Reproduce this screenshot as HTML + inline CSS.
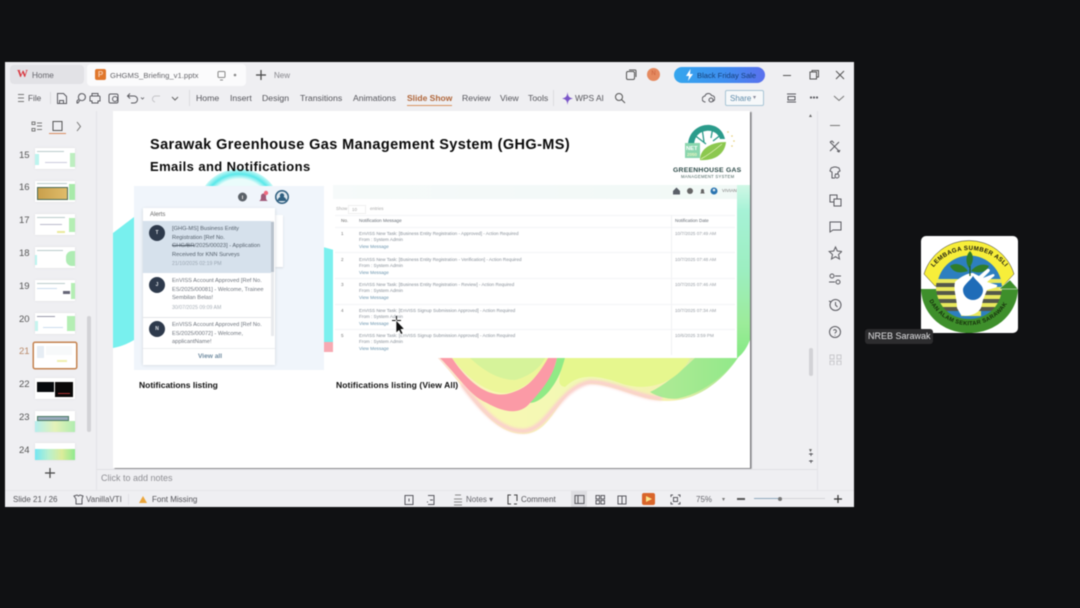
<!DOCTYPE html>
<html><head><meta charset="utf-8">
<style>
html,body{margin:0;padding:0}
body{width:1080px;height:608px;overflow:hidden;background:#101113;font-family:"Liberation Sans",sans-serif;position:relative}
#w{position:absolute;left:0;top:0;width:1080px;height:608px;filter:blur(.45px)}
.a{position:absolute;white-space:nowrap}
.t{position:absolute;white-space:nowrap;color:#4a4a4e;font-size:8.7px;line-height:11px}
.s{font-size:8px!important}
.n{position:absolute;left:19px;font-size:9.5px;color:#555;line-height:12px}
.th{position:absolute;left:35px;width:40px;height:21px;background:#fff;box-shadow:0 0 2px #dcdce0;overflow:hidden}
.th i{position:absolute;display:block}
.ic{position:absolute;stroke:#5a5a60;fill:none;stroke-width:1}
.m{position:absolute;left:359px;font-size:4.6px;line-height:6.3px;color:#868e97;white-space:nowrap}
.m b{font-weight:400;color:#6a94ae}
.d{position:absolute;left:675px;font-size:4.6px;color:#969ca3;white-space:nowrap}
.k{position:absolute;left:341px;font-size:4.6px;color:#777}
.al{position:absolute;left:172px;font-size:5.7px;line-height:8.5px;color:#6f757e;white-space:nowrap}
.av{position:absolute;left:149px;width:16px;height:16px;border-radius:8px;background:#2e3a4c;color:#dfe3e8;font-size:5px;line-height:16px;text-align:center;font-weight:700}
.hl{position:absolute;left:335px;width:400px;height:1px;background:#f3f4f6}
</style></head><body><div id="w">

<!-- window -->
<div class="a" style="left:5px;top:62px;width:849px;height:445px;background:#efeff2"></div>

<!-- tabs -->
<div class="a" style="left:10px;top:65px;width:74px;height:19px;background:#e2e2e6;border-radius:4px"></div>
<div class="a" style="left:17px;top:68px;font-size:11px;font-weight:700;color:#d9363e;line-height:12px;font-family:'Liberation Serif',serif">W</div>
<div class="t" style="left:32px;top:70px;color:#66666c;font-size:8.2px">Home</div>
<div class="a" style="left:87px;top:64px;width:159px;height:22px;background:#fbfbfc;border-radius:4px"></div>
<div class="a" style="left:95px;top:69px;width:11px;height:11px;background:#e0772c;border-radius:2px;color:#f7c9a8;font-size:8px;line-height:11px;text-align:center;font-weight:700">P</div>
<div class="t" style="left:110px;top:70px;color:#66666b;font-size:7.7px">GHGMS_Briefing_v1.pptx</div>
<svg class="ic" style="left:216px;top:70px;stroke:#888" width="26" height="12" viewBox="0 0 26 12"><rect x="2" y="1.500" width="7" height="6" rx="1"/><path d="M4 10h3"/><circle cx="19" cy="5" r="1.300" fill="#888" stroke="none"/></svg>
<svg class="ic" style="left:255px;top:69px;stroke:#444" width="12" height="12" viewBox="0 0 12 12"><path d="M6 1v10M1 6h10" stroke-width="1.200"/></svg>
<div class="t" style="left:274px;top:70px;font-size:8px;color:#85858b">New</div>

<!-- title right -->
<svg class="ic" style="left:625px;top:69px;stroke:#555" width="12" height="12" viewBox="0 0 12 12"><rect x="1.500" y="2.500" width="8" height="8" rx="1.500"/><path d="M4 1h6a1 1 0 0 1 1 1v6"/></svg>
<div class="a" style="left:647px;top:68px;width:13px;height:13px;border-radius:7px;background:#e58a60;color:#c9603c;font-size:6px;line-height:13px;text-align:center">N</div>
<div class="a" style="left:674px;top:67px;width:91px;height:16px;border-radius:8px;background:linear-gradient(90deg,#35a6ee,#3f8ff0 55%,#5a70ee)"></div>
<svg class="a" style="left:686px;top:69px" width="7" height="12" viewBox="0 0 7 12"><path d="M4.500 0L0 7h3L2 12l5-7H4z" fill="#fff"/></svg>
<div class="a" style="left:697px;top:70px;font-size:7.600px;line-height:11px;color:#16407a">Black Friday Sale</div>
<svg class="ic" style="left:782px;top:69px;stroke:#555" width="64" height="12" viewBox="0 0 64 12"><path d="M1 6.500h8"/><rect x="28" y="3" width="6.500" height="7"/><path d="M30 3V1.500h6.500V8h-2"/><path d="M54 2l8 8M62 2l-8 8"/></svg>

<!-- toolbar -->
<svg class="ic" style="left:17px;top:93px;stroke:#777" width="9" height="10" viewBox="0 0 9 10"><path d="M1 1.500h6M1 5h6M1 8.500h6"/></svg>
<div class="t" style="left:28px;top:93px;font-size:8.200px;color:#55555a">File</div>
<div class="a" style="left:50px;top:92px;width:1px;height:12px;background:#dcdce0"></div>
<svg class="ic" style="left:56px;top:92px" width="125" height="13" viewBox="0 0 125 13"><path d="M1.500 1.500h6l3 3v7h-9zM3.500 11.500v-3h4v3"/><path d="M24 8l-2 3h-1v-2l2-2a3.500 3.500 0 1 1 1 1z"/><path d="M36 4V1.500h6V4M35 4h8a1 1 0 0 1 1 1v4h-2v2h-6V9h-2V5a1 1 0 0 1 1-1z"/><rect x="53" y="2" width="9" height="9" rx="1.500"/><circle cx="59" cy="7" r="2.500"/><path d="M72 4h6a3 3 0 0 1 0 7h-3M74 1.500L71.500 4 74 6.500"/><path d="M85 5.500l1.500 1.500 1.500-1.500" stroke-width=".8"/><path d="M104 4h-4a3 3 0 0 0-1 6" stroke="#c4c4c8"/><path d="M116 5l3 3 3-3" stroke="#666"/></svg>
<div class="a" style="left:189px;top:90px;width:1px;height:16px;background:#dcdce0"></div>
<div class="t" style="left:196px;top:93px;color:#55555b">Home</div>
<div class="t" style="left:230px;top:93px;color:#55555b">Insert</div>
<div class="t" style="left:262px;top:93px;color:#55555b">Design</div>
<div class="t" style="left:300px;top:93px;color:#55555b">Transitions</div>
<div class="t" style="left:353px;top:93px;color:#55555b">Animations</div>
<div class="t" style="left:407px;top:93px;color:#b0663a;font-weight:700;font-size:8.500px">Slide Show</div>
<div class="a" style="left:407px;top:105px;width:45px;height:1px;background:#d9925f"></div>
<div class="t" style="left:462px;top:93px;color:#55555b">Review</div>
<div class="t" style="left:500px;top:93px;color:#55555b">View</div>
<div class="t" style="left:528px;top:93px;color:#55555b">Tools</div>
<div class="a" style="left:553px;top:90px;width:1px;height:16px;background:#dcdce0"></div>
<svg class="a" style="left:562px;top:92px" width="11" height="13" viewBox="0 0 11 13"><path d="M5.500 0C6 4.500 7 5.500 11 6.500 7 7.500 6 8.500 5.500 13 5 8.500 4 7.500 0 6.500 4 5.500 5 4.500 5.500 0z" fill="#7a55c8"/></svg>
<div class="t" style="left:575px;top:93px;color:#55555b;font-size:8.400px">WPS AI</div>
<svg class="ic" style="left:614px;top:92px;stroke:#555" width="12" height="12" viewBox="0 0 12 12"><circle cx="5" cy="5" r="3.500"/><path d="M7.500 7.500L11 11"/></svg>
<svg class="ic" style="left:702px;top:92px" width="13" height="12" viewBox="0 0 13 12"><path d="M3.500 10a3 3 0 0 1-.5-6 3.500 3.500 0 0 1 6.500-.5A3 3 0 0 1 10 9.500"/><circle cx="9" cy="8" r="2"/></svg>
<div class="a" style="left:725px;top:90px;width:37px;height:14px;border:1px solid #a9c5d6;border-radius:2px;background:#f6f8fa"></div>
<div class="t" style="left:730px;top:93px;font-size:8px;color:#5f8cab">Share</div>
<div class="t" style="left:753px;top:93px;font-size:6px;color:#889">▾</div>
<svg class="ic" style="left:785px;top:92px" width="60" height="12" viewBox="0 0 60 12"><path d="M2 2h9M2 10h9M3 4.500h7v3.500H3z"/><circle cx="26" cy="5.500" r=".6" fill="#555"/><circle cx="29" cy="5.500" r=".6" fill="#555"/><circle cx="32" cy="5.500" r=".6" fill="#555"/><path d="M49 4l5 4.500L59 4" stroke="#777"/></svg>

<!-- left panel -->
<div class="a" style="left:96px;top:111px;width:1px;height:379px;background:#e3e3e7"></div>
<svg class="ic" style="left:31px;top:120px;stroke:#777" width="55" height="14" viewBox="0 0 55 14"><path d="M1 2h3v2.500H1zM1 8.500h3V11H1zM6 3h5M6 6h5M6 9.500h5"/><rect x="22" y="1.500" width="9" height="9" stroke="#555"/><path d="M46 2l3.500 4.500L46 11"/></svg>
<div class="a" style="left:49px;top:133px;width:17px;height:1px;background:#d98c5e"></div>

<div class="n" style="top:150px">15</div><div class="n" style="top:182px">16</div><div class="n" style="top:215px">17</div><div class="n" style="top:248px">18</div><div class="n" style="top:281px">19</div><div class="n" style="top:314px">20</div><div class="n" style="top:346px;color:#b98a6a">21</div><div class="n" style="top:379px">22</div><div class="n" style="top:412px">23</div><div class="n" style="top:445px">24</div>

<div class="th" style="top:148px"><i style="left:2px;top:3px;width:27px;height:1px;background:#bcc"></i><i style="left:0;top:6px;width:4px;height:11px;background:#bdf4ee"></i><i style="right:0;top:5px;width:5px;height:14px;background:#bdeec0"></i><i style="left:10px;top:14px;width:22px;height:1px;background:#ccd"></i></div>
<div class="th" style="top:181px"><i style="left:2px;top:2px;width:30px;height:1px;background:#bcc"></i><i style="left:2px;top:6px;width:29px;height:11px;background:linear-gradient(90deg,#c9a04c,#e0bc6a);border:1px solid #4a6a55"></i><i style="right:0;top:3px;width:6px;height:16px;background:#a8eaaa"></i></div>
<div class="th" style="top:214px"><i style="left:2px;top:3px;width:28px;height:1px;background:#bcc"></i><i style="left:5px;top:10px;width:22px;height:1px;background:#bbc"></i><i style="right:0;top:4px;width:6px;height:14px;background:#b4eeb4"></i><i style="left:22px;top:17px;width:8px;height:2px;background:#eaea9c"></i></div>
<div class="th" style="top:247px"><i style="left:2px;top:3px;width:26px;height:1px;background:#bcc"></i><i style="left:0;top:8px;width:2px;height:10px;background:#bdf4ee"></i><i style="right:0;top:4px;width:9px;height:15px;background:#afecb4;border-radius:6px 0 0 6px"></i></div>
<div class="th" style="top:280px"><i style="left:2px;top:3px;width:28px;height:1px;background:#bcc"></i><i style="left:28px;top:11px;width:7px;height:3px;background:#667"></i><i style="right:0;top:3px;width:4px;height:16px;background:#b4eeb4"></i><i style="left:2px;top:8px;width:20px;height:1px;background:#cde"></i></div>
<div class="th" style="top:313px"><i style="left:2px;top:3px;width:18px;height:1px;background:#99a"></i><i style="left:0;top:8px;width:3px;height:10px;background:#c6f4ef"></i><i style="right:0;top:3px;width:8px;height:15px;background:#b4eeb4"></i><i style="left:8px;top:14px;width:20px;height:1px;background:#cde"></i></div>
<div class="a" style="left:33px;top:342px;width:42px;height:25px;background:#fff;border:1px solid #c58350;border-radius:2px;box-shadow:0 0 0 .5px #c58350"></div>
<div class="a" style="left:37px;top:346px;width:7px;height:12px;background:#e6edf4"></div>
<div class="a" style="left:46px;top:346px;width:26px;height:9px;background:#f7f9fa"></div>
<div class="a" style="left:57px;top:360px;width:10px;height:2px;background:#f0f0b0"></div>
<div class="th" style="top:378px"><i style="left:2px;top:4px;width:17px;height:10px;background:#06090c"></i><i style="left:20px;top:4px;width:18px;height:15px;background:#0a0808"></i><i style="left:23px;top:15px;width:12px;height:1px;background:#a33"></i></div>
<div class="th" style="top:411px"><i style="left:0;top:10px;width:40px;height:11px;background:linear-gradient(90deg,#b4eeee,#e4f2b8,#b0ecb0)"></i><i style="left:2px;top:5px;width:30px;height:3px;background:#9ab;border:1px solid #4a7a65"></i></div>
<div class="th" style="top:443px;height:17px"><i style="left:0;top:6px;width:40px;height:11px;background:linear-gradient(90deg,#74e6f2,#b8f0d0,#dcec9a,#90ea90)"></i></div>
<div class="a" style="left:87px;top:316px;width:4px;height:116px;background:#d2d2d6;border-radius:2px"></div>
<svg class="ic" style="left:44px;top:467px;stroke:#444" width="12" height="12" viewBox="0 0 12 12"><path d="M6 1v10M1 6h10" stroke-width="1.200"/></svg>

<!-- slide -->
<div class="a" style="left:113px;top:111px;width:637px;height:357px;background:#fff;overflow:hidden;box-shadow:1.500px 1px 1px #77777a"></div>
<svg class="a" style="left:113px;top:111px" width="637" height="357" viewBox="113 111 637 357">
<defs>
<linearGradient id="g1" gradientUnits="userSpaceOnUse" x1="437" y1="0" x2="750" y2="0"><stop offset="0" stop-color="#fbe0d4"/><stop offset=".18" stop-color="#f8f8b4"/><stop offset=".55" stop-color="#f0f8b4"/><stop offset=".75" stop-color="#f6f0b0"/><stop offset=".88" stop-color="#bcea98"/><stop offset="1" stop-color="#80ea84"/></linearGradient>
<linearGradient id="g2" x1="0" y1="0" x2="0" y2="1"><stop offset="0" stop-color="#d0f8e6"/><stop offset=".15" stop-color="#a6f2d6"/><stop offset=".5" stop-color="#9ceec0"/><stop offset=".8" stop-color="#9cec9a"/><stop offset="1" stop-color="#84ea82"/></linearGradient>
<radialGradient id="g3" cx=".5" cy=".5" r=".5"><stop offset=".72" stop-color="#eafcfb"/><stop offset=".86" stop-color="#58e8ea"/><stop offset="1" stop-color="#c8f8f6"/></radialGradient>
<filter id="bw"><feGaussianBlur stdDeviation="1.200"/></filter>
</defs>
<ellipse cx="239" cy="205" rx="40" ry="36" fill="url(#g3)"/>
<path d="M113 233L134 217V340Q124 346 113 348Z" fill="#78f0ee"/>
<path d="M323 247L334 250V342L323 342Z" fill="#7bf0ee"/>
<path d="M323 342L334 342V352H323Z" fill="#f7a9b2"/>
<path d="M436 356C470 392 490 434 523 434C556 434 558 384 590 384C615 384 640 401 667 401C705 401 735 370 750 336V200H737V356Z" fill="url(#g1)"/>
<path d="M462 384C485 415 503 431 523 431C548 431 558 388 590 382C615 382 640 399 662 398" fill="none" stroke="#fbd0cc" stroke-width="4.500" filter="url(#bw)"/>
<path d="M737 185H750V340C745 352 740 356 737 358Z" fill="url(#g2)"/>
<path d="M695 358C680 372 665 385 650 392 660 398 672 400 680 398 705 392 725 375 737 358Z" fill="#90e88a" opacity=".75"/>
<path d="M440 358C460 378 470 396 487 403C505 413 520 415 530 403C545 392 552 378 557 358L548 358C535 378 530 388 507 394C485 398 465 378 452 358Z" fill="#fb9aa6"/>
<path d="M452 358C470 382 490 394 507 393C530 388 540 372 548 358Z" fill="#edf69a"/>
<path d="M470 358C485 372 500 380 515 380 530 376 540 368 545 358Z" fill="#cff39a" opacity=".8"/>
<path d="M557 358C553 378 540 392 530 403C545 402 560 380 565 358Z" fill="#90ea86"/>
<path d="M565 358C560 375 555 385 565 387C580 372 600 376 620 383C650 394 680 380 690 358Z" fill="#e6f78e"/>
</svg>

<div class="a" style="left:150px;top:137px;font-size:14.500px;line-height:17px;font-weight:700;color:#0a0a0a;letter-spacing:.4px">Sarawak Greenhouse Gas Management System (GHG-MS)</div>
<div class="a" style="left:150px;top:159px;font-size:13px;line-height:16px;font-weight:700;color:#0a0a0a;letter-spacing:.4px">Emails and Notifications</div>

<!-- GHG logo -->
<svg class="a" style="left:680px;top:122px" width="60" height="42" viewBox="0 0 60 42">
<path d="M8 24C8 9 20 2 30 3 38 4 43 9 45 17L40 17C38 11 32 8 26 9 18 10 14 16 14 24Z" fill="#2b9b8b"/>
<path d="M13 12L26 22M22 6L24 20M33 5L31 16M42 12L33 19" stroke="#2b9b8b" stroke-width="1.300" fill="none"/>
<path d="M20 38C20 26 32 20 46 20 45 31 36 39 20 38Z" fill="#8cc84f"/>
<path d="M21 37C30 32 36 27 42 22" stroke="#e0f0b8" stroke-width=".8" fill="none"/>
<rect x="5" y="21" width="15" height="15" fill="#8ad6ae"/>
<text x="6" y="28" font-size="5.800" font-weight="700" fill="#fff" font-family="Liberation Sans">NET</text>
<text x="7" y="34" font-size="4.500" font-weight="700" fill="#e9f5c0" font-family="Liberation Sans">2050</text>
<circle cx="48" cy="10" r=".8" fill="#e4cc70"/><circle cx="52" cy="14" r=".8" fill="#e4cc70"/><circle cx="54" cy="19" r=".8" fill="#e4cc70"/><circle cx="52" cy="24" r=".8" fill="#e4cc70"/>
</svg>
<div class="a" style="left:673px;top:166px;font-size:6.800px;line-height:9px;font-weight:700;color:#2d4a48;letter-spacing:.25px">GREENHOUSE GAS</div>
<div class="a" style="left:681px;top:174px;font-size:4.200px;line-height:6px;color:#45605c;letter-spacing:.3px">MANAGEMENT SYSTEM</div>

<!-- left screenshot -->
<div class="a" style="left:134px;top:186px;width:190px;height:184px;background:#f0f5fb"></div>
<svg class="a" style="left:236px;top:189px" width="56" height="16" viewBox="0 0 56 16"><circle cx="6.500" cy="8" r="4.500" fill="#5b6168"/><rect x="6" y="6.500" width="1" height="3.500" fill="#ddd"/><path d="M23 12c2-1 2-2 2-5a2.500 2.500 0 0 1 5 0c0 3 0 4 2 5z" fill="#a05a78"/><circle cx="30" cy="4" r="2.200" fill="#ef6a80"/><circle cx="46" cy="8" r="7" fill="#2f5f80"/><circle cx="46" cy="8" r="5.500" fill="#dfe9f0"/><circle cx="46" cy="6.500" r="2.200" fill="#2f5f80"/><path d="M41.500 12a4.500 4.500 0 0 1 9 0z" fill="#2f5f80"/></svg>
<div class="a" style="left:275px;top:215px;width:8px;height:52px;background:#fff;box-shadow:0 1px 2px #d4d8de"></div>
<div class="a" style="left:143px;top:208px;width:132px;height:156px;background:#fff;box-shadow:0 1px 3px #c9cfd6"></div>
<div class="a" style="left:150px;top:211px;font-size:6px;line-height:8px;color:#666">Alerts</div>
<div class="a" style="left:143px;top:221px;width:130px;height:52px;background:#d6e1ec"></div>
<div class="a" style="left:271px;top:221px;width:3px;height:115px;background:#e8eaed"></div>
<div class="a" style="left:271px;top:222px;width:3px;height:50px;background:#b8c2cc"></div>
<div class="av" style="top:225px">T</div>
<div class="al" style="top:225px;color:#55606c">[GHG-MS] Business Entity<br>Registration [Ref No.<br><s>GHG/BR</s>/2025/00023] - Application<br>Received for KNN Surveys</div>
<div class="al" style="top:260px;font-size:5.200px;color:#9aa6b2">21/10/2025 02:19 PM</div>
<div class="av" style="top:277px">J</div>
<div class="al" style="top:277px">EnVISS Account Approved [Ref No.<br>ES/2025/00081] - Welcome, Trainee<br>Sembilan Belas!</div>
<div class="al" style="top:304px;font-size:5.200px;color:#a8b0b8">30/07/2025 09:09 AM</div>
<div class="a" style="left:143px;top:317px;width:128px;height:1px;background:#e4e6e8"></div>
<div class="av" style="top:321px">N</div>
<div class="al" style="top:321px">EnVISS Account Approved [Ref No.<br>ES/2025/00072] - Welcome,<br>applicantName!</div>
<div class="a" style="left:143px;top:348px;width:132px;height:16px;background:#fff;border-top:1px solid #eceef0"></div>
<div class="a" style="left:198px;top:352px;font-size:6.600px;line-height:9px;color:#6f8ba0;font-weight:700">View all</div>
<div class="a" style="left:139px;top:380px;font-size:8.500px;line-height:11px;font-weight:700;color:#111">Notifications listing</div>

<!-- right screenshot -->
<div class="a" style="left:333px;top:185px;width:404px;height:173px;background:#fff"></div>
<div class="a" style="left:333px;top:185px;width:404px;height:14px;background:linear-gradient(90deg,#f6fafa,#f1f9f6)"></div>
<svg class="a" style="left:672px;top:186px" width="48" height="10" viewBox="0 0 48 10"><path d="M1 5L4.500 1.500 8 5V8.500H1Z" fill="#5a6068"/><circle cx="18" cy="5" r="3" fill="#666"/><path d="M28 7.500c1-.5 1-1.500 1-3a1.500 1.500 0 0 1 3 0c0 1.500 0 2.500 1 3z" fill="#666"/><circle cx="42" cy="5" r="3.500" fill="#2a74b0"/><circle cx="42" cy="4" r="1.300" fill="#dfe9f0"/></svg>
<div class="a" style="left:722px;top:188px;font-size:4.500px;line-height:6px;color:#777">VIVIAN</div>
<div class="a" style="left:336px;top:206px;font-size:4.500px;line-height:6px;color:#aaa">Show</div>
<div class="a" style="left:348px;top:205px;width:16px;height:7px;border:.5px solid #f0f0f0;font-size:4.500px;line-height:7px;color:#aaa;text-indent:3px">10</div>
<div class="a" style="left:370px;top:206px;font-size:4.500px;line-height:6px;color:#aaa">entries</div>
<div class="hl" style="top:215px"></div>
<div class="hl" style="top:227px"></div>
<div class="a" style="left:671px;top:215px;width:1px;height:140px;background:#f0f1f3"></div>
<div class="k" style="top:218px;color:#666">No.</div>
<div class="m" style="top:218px;color:#666c74">Notification Message</div>
<div class="d" style="top:218px;color:#666c74">Notification Date</div>

<div class="k" style="top:231px">1</div>
<div class="m" style="top:231px">EnVISS New Task: [Business Entity Registration - Approved] - Action Required<br>From : System Admin<br><b>View Message</b></div>
<div class="d" style="top:231px">10/7/2025 07:49 AM</div>
<div class="hl" style="top:252px"></div>
<div class="k" style="top:257px">2</div>
<div class="m" style="top:257px">EnVISS New Task: [Business Entity Registration - Verification] - Action Required<br>From : System Admin<br><b>View Message</b></div>
<div class="d" style="top:257px">10/7/2025 07:48 AM</div>
<div class="hl" style="top:278px"></div>
<div class="k" style="top:282px">3</div>
<div class="m" style="top:282px">EnVISS New Task: [Business Entity Registration - Review] - Action Required<br>From : System Admin<br><b>View Message</b></div>
<div class="d" style="top:282px">10/7/2025 07:46 AM</div>
<div class="hl" style="top:304px"></div>
<div class="k" style="top:308px">4</div>
<div class="m" style="top:308px">EnVISS New Task: [EnVISS Signup Submission Approved] - Action Required<br>From : System Admin<br><b>View Message</b></div>
<div class="d" style="top:308px">10/7/2025 07:34 AM</div>
<div class="hl" style="top:329px"></div>
<div class="k" style="top:333px">5</div>
<div class="m" style="top:333px">EnVISS New Task: [EnVISS Signup Submission Approved] - Action Required<br>From : System Admin<br><b>View Message</b></div>
<div class="d" style="top:333px">10/6/2025 3:59 PM</div>

<div class="a" style="left:336px;top:380px;font-size:8.500px;line-height:10px;font-weight:700;color:#111;letter-spacing:.1px">Notifications listing (View All)</div>

<!-- cursor -->
<svg class="a" style="left:390px;top:315px" width="16" height="20" viewBox="0 0 16 20"><path d="M6.500 1v9M2 5.500h9" stroke="#111" stroke-width="1"/><path d="M6 5L6 18 9 15.500 11 19.500 13 18.500 11 14.500 14.500 14Z" fill="#111" stroke="#fff" stroke-width=".7"/></svg>

<!-- right rail -->
<div class="a" style="left:817px;top:111px;width:1px;height:379px;background:#e3e3e7"></div>
<div class="a" style="left:809px;top:348px;width:4px;height:28px;background:#d2d2d6;border-radius:2px"></div>
<div class="a" style="left:808px;top:113px;font-size:5px;line-height:6px;color:#666">▲</div>
<div class="a" style="left:808px;top:448px;font-size:5px;line-height:6px;color:#666">▼</div>
<svg class="ic" style="left:808px;top:452px" width="6" height="12" viewBox="0 0 6 12"><path d="M1 2h4M3 1v3M1 9h4M3 8v3"/></svg>
<svg class="ic" style="left:828px;top:120px" width="14" height="245" viewBox="0 0 14 245">
<path d="M2 5.500h10" stroke="#777"/>
<path d="M2 22l9 9M11 22l-9 9M2 22l2-1 2 2M9 31l2 1 1-2"/>
<path d="M3 48l3-1h2l3 1 1 3-2 1v2H7M3 48l-1 3 2 1v6h3"/><circle cx="9" cy="56" r="2"/>
<rect x="2" y="75" width="7" height="7"/><rect x="6" y="79" width="7" height="7" fill="#efeff2"/>
<path d="M2 102h11v8H5l-3 2z"/>
<path d="M7.500 127l1.800 4 4.500.5-3.300 3 1 4.500-4-2.300-4 2.300 1-4.500-3.300-3 4.500-.5z"/>
<circle cx="4" cy="156" r="2"/><path d="M7 156h6M1 162h6"/><circle cx="10" cy="162" r="2"/>
<circle cx="7.500" cy="185" r="5.500"/><path d="M7.500 182v3l2 2M1 181l2 1"/>
<circle cx="7" cy="212" r="5.500"/><path d="M5.500 210.500a1.500 1.500 0 1 1 2 2c-.5.300-.5.500-.5 1M7 215v.5"/>
<g stroke="#c8c8cc"><rect x="2" y="235" width="4" height="4"/><rect x="9" y="235" width="4" height="4"/><rect x="2" y="241" width="4" height="4"/><rect x="9" y="241" width="4" height="4"/></g>
</svg>

<!-- notes -->
<div class="a" style="left:97px;top:469px;width:720px;height:1px;background:#e0e0e4"></div>
<div class="a" style="left:101px;top:472px;font-size:9px;line-height:12px;color:#8f8f94">Click to add notes</div>
<div class="a" style="left:5px;top:490px;width:849px;height:1px;background:#e6e6ea"></div>

<!-- status bar -->
<div class="t s" style="left:13px;top:494px;color:#55555a">Slide 21 / 26</div>
<svg class="ic" style="left:73px;top:494px" width="11" height="11" viewBox="0 0 11 11"><path d="M1 2l3-1 1.500 1 1.500-1 3 1-1 3v5H3V5z"/></svg>
<div class="t s" style="left:86px;top:494px;color:#55555a">VanillaVTI</div>
<div class="a" style="left:128px;top:494px;width:1px;height:11px;background:#e2e2e6"></div>
<svg class="a" style="left:139px;top:496px" width="8" height="7" viewBox="0 0 8 7"><path d="M4 0l4 7H0z" fill="#eba53a"/></svg>
<div class="t s" style="left:152px;top:494px;color:#55555a">Font Missing</div>
<svg class="ic" style="left:403px;top:494px" width="34" height="12" viewBox="0 0 34 12"><rect x="2" y="1.500" width="8" height="9"/><path d="M6 4.500v3"/><path d="M25 1.500h6v9h-6M27 6h3M25 8h-1"/></svg>
<svg class="ic" style="left:453px;top:494px" width="10" height="12" viewBox="0 0 10 12"><path d="M2 1h6M1 5h8M1 8h8M1 11h8" stroke="#888"/></svg>
<div class="t s" style="left:466px;top:494px;color:#66666c">Notes ▾</div>
<svg class="ic" style="left:507px;top:494px;stroke:#444" width="11" height="11" viewBox="0 0 11 11"><path d="M4 1H1v9h3M7 1h3v6M7 10h3"/></svg>
<div class="t s" style="left:521px;top:494px;color:#55555a">Comment</div>
<div class="a" style="left:571px;top:491px;width:16px;height:16px;background:#dedee2"></div>
<svg class="ic" style="left:574px;top:494px" width="56" height="11" viewBox="0 0 56 11"><rect x="1" y="1.500" width="9" height="8"/><path d="M4 1.500v8"/><rect x="22" y="1.500" width="3.500" height="3.500"/><rect x="27" y="1.500" width="3.500" height="3.500"/><rect x="22" y="6.500" width="3.500" height="3.500"/><rect x="27" y="6.500" width="3.500" height="3.500"/><path d="M44 2h4v8h-4zM48 2h4v8h-4z"/></svg>
<div class="a" style="left:642px;top:493px;width:13px;height:12px;background:#d9652a;border-radius:2px"></div>
<svg class="a" style="left:646px;top:496px" width="6" height="6" viewBox="0 0 6 6"><path d="M0 0l6 3-6 3z" fill="#fbe58a"/></svg>
<svg class="ic" style="left:670px;top:494px" width="11" height="11" viewBox="0 0 11 11"><path d="M1 3V1h2M8 1h2v2M1 8v2h2M8 10h2V8"/><rect x="3.500" y="3.500" width="4" height="4"/></svg>
<div class="t s" style="left:696px;top:494px;color:#66666c">75%</div>
<div class="t" style="left:722px;top:495px;font-size:6px;color:#777">▾</div>
<div class="a" style="left:737px;top:498px;width:8px;height:1.500px;background:#555"></div>
<div class="a" style="left:754px;top:498px;width:24px;height:1px;background:#8fa9bd"></div>
<div class="a" style="left:778px;top:498px;width:47px;height:1px;background:#d4d4d8"></div>
<div class="a" style="left:778px;top:496.500px;width:4px;height:4px;border-radius:2px;background:#777"></div>
<svg class="ic" style="left:833px;top:494px;stroke:#333" width="10" height="10" viewBox="0 0 10 10"><path d="M5 1v8M1 5h8" stroke-width="1.200"/></svg>

<!-- NREB participant -->
<div class="a" style="left:921px;top:236px;width:97px;height:97px;background:#fff;border-radius:5px"></div>
<svg class="a" style="left:921px;top:236px" width="97" height="97" viewBox="0 0 97 97">
<defs><clipPath id="cb"><path d="M15 52A33 33 0 0 1 81 52C81 70 66 84 48 84 30 84 15 70 15 52Z"/></clipPath></defs>
<path d="M3 38A47 47 0 0 1 93 38L82 50H14Z" fill="#f7ee3a" stroke="#333" stroke-width=".5"/>
<path d="M16 52A32.500 32.500 0 0 1 81 52V84H16Z" fill="#2d7fbf" clip-path="url(#cb)"/>
<g clip-path="url(#cb)">
<path d="M14 43H40V47H14ZM14 51H38V55H14ZM14 59H38V63H14ZM14 67H40V71H14ZM56 67H82V71H56ZM58 59H82V63H58ZM60 51H82V55H60ZM62 43H82V47H62ZM40 75H60V80H40Z" fill="#e9e85c"/>
<path d="M14 47H39V51H14ZM14 55H38V59H14ZM14 63H39V67H14ZM14 71H42V75H14ZM54 71H82V75H54ZM57 63H82V67H57ZM60 55H82V59H60Z" fill="#55584a"/>
</g>
<path d="M0 53H15C17 72 31 83 48 83 65 83 79 72 81 53H97C96 78 75 97 48 97 21 97 1 78 0 53Z" fill="#3e8f2b"/>
<path d="M78 53L89 44 97 53Z" fill="#3e8f2b" stroke="#fff" stroke-width=".5"/>
<path d="M34 46C38 42 46 37 52 37L58 40 66 33C68 32 70 34 68 36L62 42 72 38C74 38 74 40 72 41L66 46 76 49C77 50 75 52 73 52L66 54 62 64 60 72C56 79 46 81 40 79L36 72C36 62 32 54 34 46Z" fill="#fff"/>
<path d="M52 40C49 45 42 49 42 54A10 10 0 0 0 62 54C62 49 55 45 52 40Z" fill="#1f6cb8"/>
<path d="M49 15C45 19 44 26 48 32 53 26 53 19 49 15ZM29 30C34 26 42 28 47 35 38 38 32 36 29 30ZM68 30C62 27 55 29 50 35 59 38 65 36 68 30Z" fill="#2f7d2a"/>
<path d="M49 30V40" stroke="#1e5a1e" stroke-width="1.200"/>
<path id="ar1" d="M12 32A46 46 0 0 1 85 32" fill="none"/>
<text font-size="6.200" font-weight="700" fill="#1a1a10" font-family="Liberation Sans" letter-spacing=".35"><textPath href="#ar1" startOffset="1">LEMBAGA SUMBER ASLI</textPath></text>
<path id="ar2" d="M7 62A44.500 44.500 0 0 0 89 62" fill="none"/>
<text font-size="5.800" font-weight="700" fill="#142c0a" font-family="Liberation Sans" letter-spacing=".25"><textPath href="#ar2" startOffset="3">DAN ALAM SEKITAR SARAWAK</textPath></text>
</svg>
<div class="a" style="left:865px;top:329px;width:68px;height:15px;background:#2c2c2e;border-radius:3px"></div>
<div class="a" style="left:868px;top:330px;font-size:9px;line-height:13px;color:#e2e2e4">NREB Sarawak</div>
</div></body></html>
